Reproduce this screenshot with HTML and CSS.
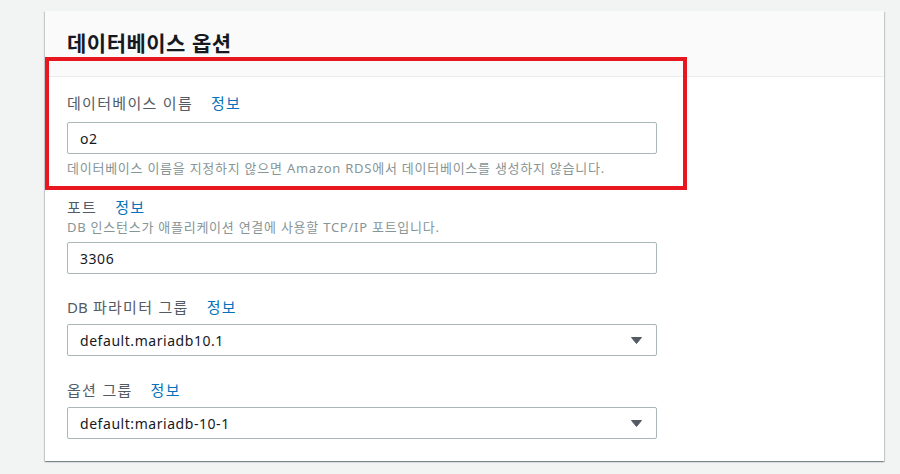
FILE: index.html
```html
<!DOCTYPE html>
<html lang="ko">
<head>
<meta charset="utf-8">
<title>데이터베이스 옵션</title>
<link rel="stylesheet" href="styles.css">
</head>
<body>
<div class="page">
  <section class="card">
    <header class="card-header">
      <h2 class="card-title">데이터베이스 옵션</h2>
    </header>
    <div class="card-body">
      <div class="field field-name">
        <div class="label"><span>데이터베이스 이름</span><a class="info">정보</a></div>
        <div class="control">o2</div>
        <div class="hint hint-below">데이터베이스 이름을 지정하지 않으면 Amazon RDS에서 데이터베이스를 생성하지 않습니다.</div>
      </div>
      <div class="field field-port">
        <div class="label"><span>포트</span><a class="info">정보</a></div>
        <div class="hint hint-above">DB 인스턴스가 애플리케이션 연결에 사용할 TCP/IP 포트입니다.</div>
        <div class="control">3306</div>
      </div>
      <div class="field field-param">
        <div class="label"><span><span class="latin">DB</span> 파라미터 그룹</span><a class="info">정보</a></div>
        <div class="control select"><span>default.mariadb10.1</span>
          <svg class="caret" width="11" height="7" viewBox="0 0 11 7"><path d="M0.5 0.5 H10.5 L5.5 6.5 Z" fill="#545b64" stroke="#545b64" stroke-width="1" stroke-linejoin="round"/></svg>
        </div>
      </div>
      <div class="field field-option">
        <div class="label"><span>옵션 그룹</span><a class="info">정보</a></div>
        <div class="control select"><span>default:mariadb-10-1</span>
          <svg class="caret" width="11" height="7" viewBox="0 0 11 7"><path d="M0.5 0.5 H10.5 L5.5 6.5 Z" fill="#545b64" stroke="#545b64" stroke-width="1" stroke-linejoin="round"/></svg>
        </div>
      </div>
    </div>
    <div class="highlight"></div>
  </section>
</div>
</body>
</html>
```
FILE: styles.css
```css
* { box-sizing: border-box; }
html, body { margin: 0; padding: 0; }
body {
  background: #f2f3f3;
  font-family: "Noto Sans", "Noto Sans CJK KR", sans-serif;
  color: #16191f;
  width: 900px;
  height: 474px;
  overflow: hidden;
}
.page {
  padding: 11px 16px 0 45px;
}
.card {
  position: relative;
  width: 839px;
  background: #ffffff;
  box-shadow: 0 1px 1px 0 rgba(0, 28, 36, 0.3), 1px 1px 1px 0 rgba(0, 28, 36, 0.15), -1px 1px 1px 0 rgba(0, 28, 36, 0.15);
}
.card-header {
  height: 66px;
  background: #fafafa;
  border-bottom: 1px solid #eaeded;
  display: flex;
  align-items: center;
  padding: 0 22px 2px;
}
.card-title {
  margin: 0;
  font-size: 21px;
  font-weight: 700;
  line-height: 26px;
  letter-spacing: 0.5px;
  color: #16191f;
}
.card-body {
  padding: 16px 22px 22px;
}
.label {
  display: flex;
  gap: 18px;
  font-size: 15px;
  line-height: 20px;
  letter-spacing: 1.3px;
  color: #545b64;
}
.latin {
  letter-spacing: 0;
}
.info {
  color: #0073bb;
}
.control {
  width: 590px;
  height: 32px;
  border: 1px solid #aab7b8;
  border-radius: 2px;
  background: #ffffff;
  padding: 0 14px 0 12px;
  display: flex;
  align-items: center;
  font-size: 14px;
  letter-spacing: 0.55px;
  color: #16191f;
}
.select {
  justify-content: space-between;
}
.caret { display: block; }
.hint {
  font-size: 13px;
  line-height: 16px;
  letter-spacing: 0.75px;
  color: #879596;
}
.field-name .control { margin-top: 9px; }
.hint-below { margin-top: 6px; }
.field-port { margin-top: 21px; }
.hint-above { margin-top: 2px; }
.field-port .control { margin-top: 7px; }
.field-param { margin-top: 23px; }
.field-param .control { margin-top: 7px; }
.field-option { margin-top: 24px; }
.field-option .control { margin-top: 7px; }
.highlight {
  position: absolute;
  left: 0;
  top: 46px;
  width: 642px;
  height: 133px;
  border: 4px solid #e8171f;
  pointer-events: none;
}
```
